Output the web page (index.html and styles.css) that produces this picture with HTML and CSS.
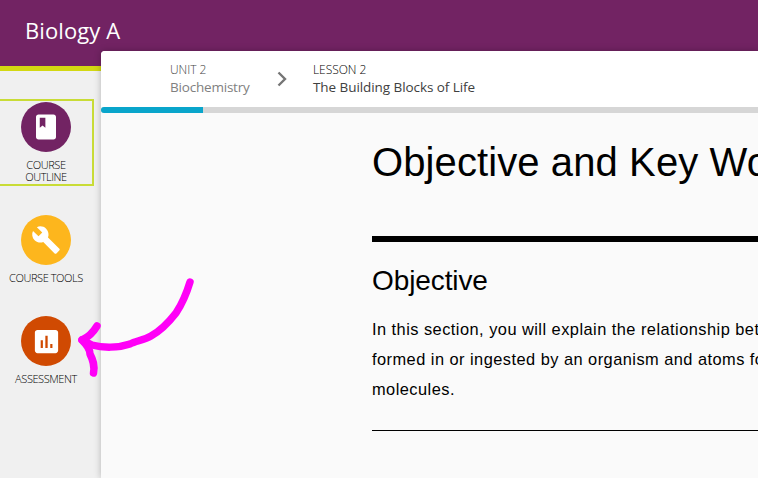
FILE: index.html
```html
<!DOCTYPE html>
<html lang="en">
<head>
<meta charset="utf-8">
<title>Biology A</title>
<link rel="stylesheet" href="styles.css">
</head>
<body>
<header class="topbar"><span class="course-title">Biology A</span></header>
<div class="layout">
  <nav class="sidebar">
    <a class="nav-item active">
      <span class="disc outline"><svg width="30" height="30" viewBox="0 0 24 24"><path fill="#fff" d="M18 2H6c-1.100 0-2 .9-2 2v16c0 1.100.9 2 2 2h12c1.100 0 2-.9 2-2V4c0-1.100-.9-2-2-2zM7 4.500h4.500v8l-2.250-1.700L7 12.500V4.500z"/></svg></span>
      <span class="nav-label">COURSE<br>OUTLINE</span>
    </a>
    <a class="nav-item tools-item">
      <span class="disc tools"><svg width="30" height="30" viewBox="0 0 24 24"><path fill="#fff" d="M22.700 19l-9.100-9.100c.9-2.300.4-5-1.500-6.900-2-2-5-2.400-7.400-1.300L9 6 6 9 1.600 4.700C.4 7.100.9 10.100 2.900 12.100c1.900 1.900 4.600 2.400 6.900 1.500l9.100 9.100c.4.4 1 .4 1.400 0l2.300-2.300c.5-.4.5-1.100.1-1.400z"/></svg></span>
      <span class="nav-label">COURSE TOOLS</span>
    </a>
    <a class="nav-item">
      <span class="disc assess"><svg width="31" height="31" viewBox="0 0 24 24"><path fill="#fff" d="M19 3H5c-1.100 0-2 .9-2 2v14c0 1.100.9 2 2 2h14c1.100 0 2-.9 2-2V5c0-1.100-.9-2-2-2zM9.200 17H7.500v-6h1.700v6zm3.700 0h-1.800V7.500h1.800v9.500zm3.700 0h-1.700v-3h1.700v3z"/></svg></span>
      <span class="nav-label">ASSESSMENT</span>
    </a>
  </nav>
  <main class="panel">
    <div class="crumbs">
      <div class="crumb unit"><span class="crumb-kind">UNIT 2</span><span class="crumb-name">Biochemistry</span></div>
      <svg class="chevron" width="10" height="16" viewBox="0 0 10 16"><path d="M1.500 1.500L8 8l-6.500 6.500" fill="none" stroke="#757575" stroke-width="2.400"/></svg>
      <div class="crumb lesson"><span class="crumb-kind">LESSON 2</span><span class="crumb-name">The Building Blocks of Life</span></div>
    </div>
    <div class="progress"><div class="progress-value"></div></div>
    <article class="content">
      <h1>Objective and Key Words</h1>
      <h2>Objective</h2>
      <p>In this section, you will explain the relationship between<br>formed in or ingested by an organism and atoms found<br>molecules.</p>
      <hr>
    </article>
  </main>
</div>
<svg class="arrow" width="130" height="110" viewBox="70 270 130 110"><g fill="none" stroke="#ff00f7" stroke-linecap="round" stroke-linejoin="round"><path stroke-width="7.500" d="M190 282C187 292 182 304 176 313C169 322 160 331 151 336C144 340 136 341 130 344C118 348 103 348 92 345L82 340"/><path stroke-width="7.500" d="M97 326C94 331 89 337 82 340C88 346 90 350 90 354C93 360 95 365 93.500 373"/></g></svg>
</body>
</html>
```
FILE: styles.css
```css
* { box-sizing: border-box; }
body {
  margin: 0;
  height: 478px;
  overflow: hidden;
  background: #f0f0f0;
  font-family: "Open Sans", "Noto Sans", sans-serif;
}
.topbar {
  height: 71px;
  padding: 15px 25px;
  background: #722363;
  border-bottom: 5px solid #d3d812;
}
.course-title {
  display: block;
  color: #fff;
  font-size: 22px;
  line-height: 30px;
  letter-spacing: .1px;
  white-space: nowrap;
}
.layout { display: flex; height: 407px; }
.sidebar { width: 101px; flex: none; padding-top: 28px; }
.nav-item {
  display: flex;
  flex-direction: column;
  align-items: center;
  width: 94px;
  padding-right: 2px;
}
.active {
  height: 87px;
  padding-top: 1px;
  padding-right: 0;
  border: 2px solid #c9dc36;
  border-left: 0;
}
.tools-item { margin-top: 29px; height: 101px; }
.disc {
  display: flex;
  align-items: center;
  justify-content: center;
  width: 50px;
  height: 50px;
  border-radius: 50%;
  flex: none;
}
.outline { background: #722363; }
.tools { background: #fdb61d; }
.assess { background: #d04a02; }
.nav-label {
  margin-top: 7px;
  color: #000;
  font-size: 11px;
  font-weight: 300;
  line-height: 12px;
  letter-spacing: -0.42px;
  text-align: center;
  white-space: nowrap;
}
.panel {
  position: relative;
  flex: 1;
  min-width: 0;
  height: 427px;
  margin-top: -20px;
  overflow: hidden;
  background: #fafafa;
  border-radius: 4px 0 0 0;
  box-shadow: 0 0 7px rgba(0, 0, 0, .25);
}
.crumbs { display: flex; height: 56px; padding: 10px 0 0 69px; background: #fff; }
.crumb { display: flex; flex-direction: column; white-space: nowrap; color: #404040; }
.unit { width: 107px; color: #808080; }
.lesson { margin-left: 26px; }
.crumb-kind { font-size: 12px; line-height: 17px; letter-spacing: -.05px; font-weight: 300; color: #000; }
.unit .crumb-kind { color: #444; }
.crumb-name { font-size: 13.5px; line-height: 18px; letter-spacing: -.07px; }
.unit .crumb-name { letter-spacing: -.2px; }
.chevron { margin-top: 10px; flex: none; }
.progress { height: 6px; background: #d6d6d6; border-radius: 3px 0 0 3px; overflow: hidden; }
.progress-value { width: 102px; height: 6px; background: #09a5cb; }
.content { margin-left: 271px; font-family: "Liberation Sans", Arial, sans-serif; color: #000; }
h1, h2, p { margin: 0; font-weight: 400; white-space: nowrap; }
h1 {
  height: 129px;
  padding-top: 26px;
  font-size: 40px;
  line-height: 46px;
  letter-spacing: .1px;
  border-bottom: 6px solid #000;
}
h2 { margin-top: 23px; font-size: 28px; line-height: 32px; letter-spacing: -.1px; }
p { margin-top: 17px; font-size: 16.4px; line-height: 30px; letter-spacing: .46px; }
hr { margin: 26px 0 0; border: 0; height: 1px; background: #000; }
.arrow { position: absolute; left: 70px; top: 270px; }
```
